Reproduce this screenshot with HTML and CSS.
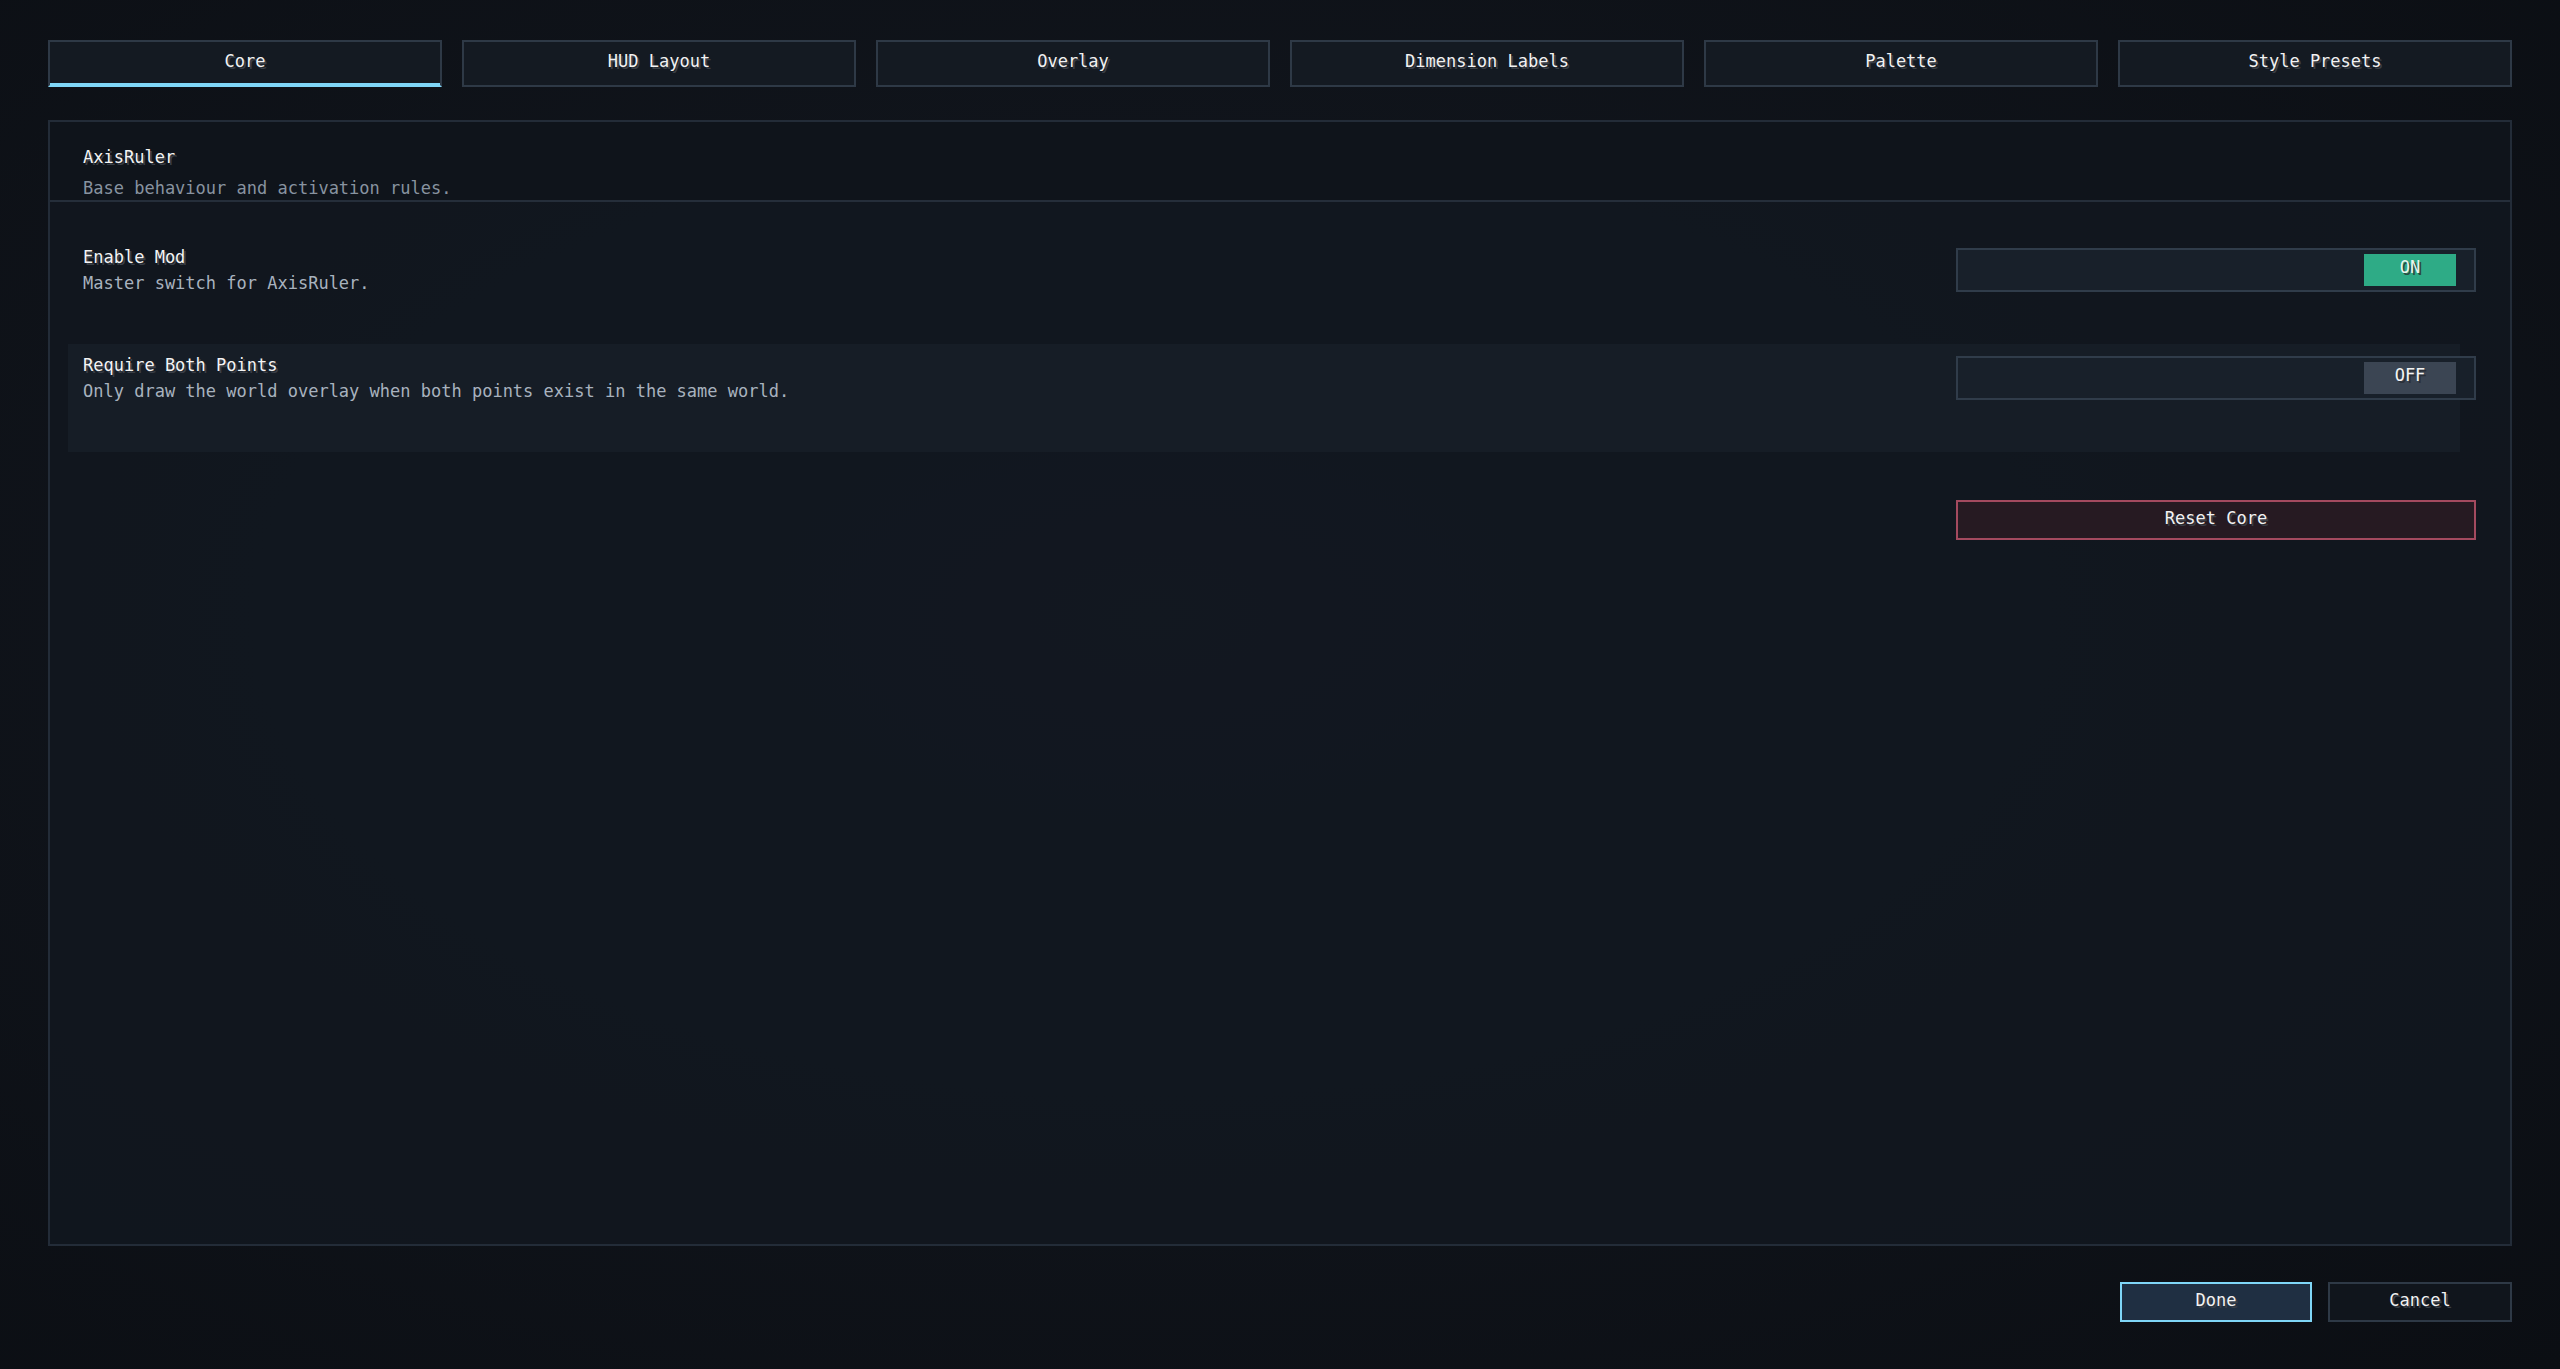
FILE: index.html
```html
<!DOCTYPE html>
<html>
<head>
<meta charset="utf-8">
<title>AxisRuler Settings</title>
<link rel="stylesheet" href="styles.css">
</head>
<body>
<div class="screen">
    <div class="tabs">
        <div class="tab active">Core</div>
        <div class="tab">HUD Layout</div>
        <div class="tab">Overlay</div>
        <div class="tab">Dimension Labels</div>
        <div class="tab">Palette</div>
        <div class="tab">Style Presets</div>
    </div>

    <div class="panel">
        <div class="panel-head">
            <div class="name">AxisRuler</div>
            <div class="hint">Base behaviour and activation rules.</div>
        </div>

        <div class="options">
            <div class="option">
                <div class="label">
                    <div class="name">Enable Mod</div>
                    <div class="hint">Master switch for AxisRuler.</div>
                </div>
                <div class="toggle"><span class="state on">ON</span></div>
            </div>
            <div class="option hover">
                <div class="label">
                    <div class="name">Require Both Points</div>
                    <div class="hint">Only draw the world overlay when both points exist in the same world.</div>
                </div>
                <div class="toggle"><span class="state off">OFF</span></div>
            </div>
            <div class="reset-row">
                <div class="button reset">Reset Core</div>
            </div>
        </div>
    </div>

    <div class="footer">
        <div class="button done">Done</div>
        <div class="button cancel">Cancel</div>
    </div>
</div>
</body>
</html>
```

FILE: styles.css
```css
    * {
        margin: 0;
        padding: 0;
        box-sizing: border-box;
    }

    html, body {
        width: 100%;
        height: 100%;
    }

    body {
        font-family: 'DejaVu Sans Mono', 'Liberation Mono', monospace;
        font-size: 17px;
        line-height: 20px;
        color: #f2f2f2;
        background: #0d1016;
        background: radial-gradient(ellipse at 45% 45%, #151b24 0%, #10141b 45%, #0b0e13 100%);
        -webkit-font-smoothing: none;
    }

    .screen {
        height: 100%;
        display: flex;
        flex-direction: column;
        padding: 40px 48px 47px;
    }

    /* tab strip */
    .tabs {
        display: grid;
        grid-template-columns: repeat(6, 1fr);
        gap: 20px;
    }

    .tab {
        height: 47px;
        padding-top: 9px;
        text-align: center;
        background: #141a22;
        border: 2px solid #2e3946;
        text-shadow: 2px 2px 0 #3a3f47;
    }

    .tab.active {
        border-bottom-color: #7fd6f7;
        box-shadow: inset 0 -2px 0 #7fd6f7;
    }

    /* main panel */
    .panel {
        flex: 1;
        margin-top: 33px;
        background: rgba(18, 24, 32, 0.85);
        border: 2px solid #232c38;
    }

    .panel .name {
        color: #f4f4f4;
        text-shadow: 2px 2px 0 #3a3f47;
    }

    .panel .hint {
        color: #a8b2be;
    }

    .panel-head {
        height: 80px;
        padding: 25px 0 0 33px;
        background: #0f141b;
        border-bottom: 2px solid #252e3a;
    }

    .panel-head .hint {
        margin-top: 11px;
        color: #8893a0;
    }

    .options {
        padding-top: 34px;
    }

    .option {
        display: flex;
        justify-content: space-between;
        align-items: flex-start;
        height: 108px;
        margin: 0 50px 0 18px;
        padding: 11px 0 0 15px;
    }

    .option.hover {
        background: #161d26;
    }

    .option .hint {
        margin-top: 6px;
    }

    .toggle {
        width: 520px;
        height: 44px;
        margin: 1px -16px 0 0;
        padding-right: 18px;
        display: flex;
        justify-content: flex-end;
        align-items: center;
        background: #18202a;
        border: 2px solid #303c4a;
    }

    .toggle .state {
        width: 92px;
        height: 32px;
        padding-top: 3px;
        text-align: center;
        color: #f4f4f4;
        text-shadow: 2px 2px 0 #2b3038;
    }

    .toggle .on {
        background: #2eab86;
        color: #e8f4ee;
        text-shadow: 2px 2px 0 #2a4a40;
    }

    .toggle .off {
        background: #3b4553;
    }

    .reset-row {
        display: flex;
        justify-content: flex-end;
        margin: 48px 34px 0 0;
    }

    /* buttons */
    .button {
        height: 40px;
        padding-top: 6px;
        text-align: center;
        border: 2px solid #2e3946;
        text-shadow: 2px 2px 0 #3a3f47;
        cursor: pointer;
    }

    .button.reset {
        width: 520px;
        background: #261a22;
        border-color: #a34a5f;
    }

    .footer {
        display: flex;
        justify-content: flex-end;
        gap: 16px;
        margin-top: 36px;
    }

    .button.done {
        width: 192px;
        background: #1f2f42;
        border-color: #7fd6f7;
    }

    .button.cancel {
        width: 184px;
        background: #10151c;
    }
```
